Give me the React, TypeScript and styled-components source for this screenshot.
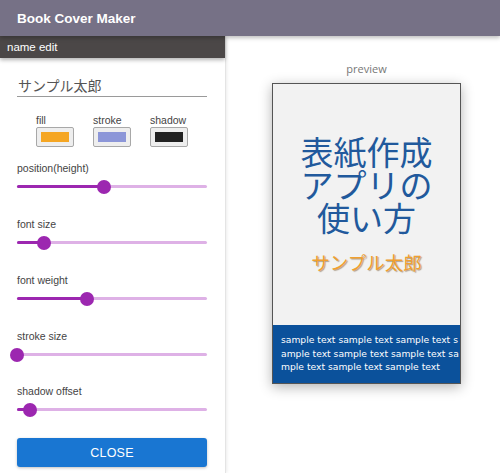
import React from "react";
import styled, { createGlobalStyle } from "styled-components";

const Global = createGlobalStyle`
  html, body { margin: 0; padding: 0; background: #fff; }
  body { font-family: "Liberation Sans", Arial, sans-serif; }
  * { box-sizing: border-box; }
`;

const Page = styled.div`
  width: 500px;
  height: 473px;
  display: flex;
  flex-direction: column;
  overflow: hidden;
`;

const AppBar = styled.header`
  height: 36px;
  flex: none;
  background: #767186;
  display: flex;
  align-items: center;
  padding-left: 17px;
  color: #fff;
  font-weight: bold;
  font-size: 13.5px;
  box-shadow: 0 2px 4px rgba(0,0,0,0.25);
  position: relative;
  z-index: 2;
`;

const Body = styled.div`
  flex: 1;
  display: flex;
  min-height: 0;
`;

const Drawer = styled.aside`
  width: 226px;
  flex: none;
  border-right: 1px solid #e4e4e4;
  box-shadow: 1px 0 3px rgba(0,0,0,0.08);
  display: flex;
  flex-direction: column;
`;

const DrawerHead = styled.div`
  height: 22px;
  flex: none;
  background: #4b4747;
  color: #fff;
  font-size: 11.5px;
  display: flex;
  align-items: center;
  padding-left: 7px;
  box-shadow: 0 2px 4px rgba(0,0,0,0.3);
  position: relative;
  z-index: 1;
`;

const DrawerBody = styled.div`
  padding: 0 18px 0 17px;
  display: flex;
  flex-direction: column;
  flex: none;
`;

const NameField = styled.div`
  margin-top: 17px;
  height: 22px;
  border-bottom: 1px solid #9a9a9a;
  font-family: "Noto Sans CJK JP", sans-serif;
  font-size: 14px;
  color: #555;
  padding-left: 1px;
  line-height: 20px;
`;

const ColorRow = styled.div`
  display: flex;
  gap: 19px;
  padding-left: 19px;
  margin-top: 17px;
`;

const ColorItem = styled.div`
  display: flex;
  flex-direction: column;
  font-size: 10.5px;
  color: #444;
`;

const ColorBox = styled.div<{ $c: string }>`
  margin-top: 1px;
  width: 38px;
  height: 20px;
  border: 1px solid #a8a8a8;
  border-radius: 2px;
  background: #eee;
  padding: 4px;
  &::after {
    content: "";
    display: block;
    width: 100%;
    height: 100%;
    background: ${p => p.$c};
  }
`;

const SliderBlock = styled.div<{ $mt: number }>`
  margin-top: ${p => p.$mt}px;
  display: flex;
  flex-direction: column;
`;

const SliderLabel = styled.div`
  font-size: 10.5px;
  color: #444;
  height: 13px;
`;

const SliderTrack = styled.div`
  position: relative;
  height: 22px;
  width: 190px;
`;

const Rail = styled.div`
  position: absolute;
  left: 0;
  right: 0;
  top: 10px;
  height: 3px;
  border-radius: 2px;
  background: #deb1e6;
`;

const Fill = styled.div`
  position: absolute;
  left: 0;
  top: 10px;
  height: 3px;
  border-radius: 2px;
  background: #9c27b0;
`;

const Thumb = styled.div`
  position: absolute;
  top: 4.5px;
  width: 14px;
  height: 14px;
  margin-left: -7px;
  border-radius: 50%;
  background: #9c27b0;
`;

const CloseButton = styled.button`
  margin-top: 18px;
  width: 190px;
  height: 29px;
  border: none;
  border-radius: 3px;
  background: #1976d2;
  color: #fff;
  font-family: "Liberation Sans", Arial, sans-serif;
  font-size: 12.5px;
  letter-spacing: 0.2px;
  box-shadow: 0 1px 3px rgba(0,0,0,0.25);
`;

const Main = styled.main`
  flex: 1;
  display: flex;
  flex-direction: column;
  align-items: center;
  padding-left: 7px;
`;

const PreviewLabel = styled.div`
  margin-top: 25px;
  font-family: "Open Sans", sans-serif;
  font-size: 11px;
  color: #777;
`;

const Cover = styled.div`
  margin-top: 7px;
  width: 189px;
  height: 301px;
  border: 1px solid #555;
  background: #f2f2f2;
  display: flex;
  flex-direction: column;
  box-shadow: 0 3px 12px rgba(0,0,0,0.3);
`;

const CoverTop = styled.div`
  flex: 1;
  display: flex;
  flex-direction: column;
  align-items: center;
`;

const Title = styled.div`
  margin-top: 51px;
  font-family: "Noto Sans CJK JP", sans-serif;
  font-size: 33px;
  line-height: 33px;
  color: #21599c;
  text-align: center;
  width: 140px;
`;

const Author = styled.div`
  margin-top: 16px;
  font-family: "Noto Sans CJK JP", sans-serif;
  font-size: 18.5px;
  line-height: 24px;
  color: #f0a030;
  text-shadow: 1px 1px 1px rgba(90,60,20,0.45);
`;

const Band = styled.div`
  height: 58px;
  background: #0b519b;
  color: #fff;
  font-family: "DejaVu Sans", Verdana, sans-serif;
  font-size: 9.2px;
  line-height: 13.5px;
  padding: 8px 0 0 8px;
  word-break: break-all;
`;

const sliders = [
  { label: "position(height)", v: 46, mt: 15 },
  { label: "font size", v: 14, mt: 21 },
  { label: "font weight", v: 37, mt: 21 },
  { label: "stroke size", v: 0, mt: 21 },
  { label: "shadow offset", v: 7, mt: 20 },
];

export default function App() {
  return (
    <Page>
      <Global />
      <AppBar>Book Cover Maker</AppBar>
      <Body>
        <Drawer>
          <DrawerHead>name edit</DrawerHead>
          <DrawerBody>
            <NameField>サンプル太郎</NameField>
            <ColorRow>
              <ColorItem>fill<ColorBox $c="#f5a623" /></ColorItem>
              <ColorItem>stroke<ColorBox $c="#8c96d8" /></ColorItem>
              <ColorItem>shadow<ColorBox $c="#222" /></ColorItem>
            </ColorRow>
            {sliders.map(s => (
              <SliderBlock key={s.label} $mt={s.mt}>
                <SliderLabel>{s.label}</SliderLabel>
                <SliderTrack>
                  <Rail />
                  <Fill style={{ width: `${s.v}%` }} />
                  <Thumb style={{ left: `${s.v}%` }} />
                </SliderTrack>
              </SliderBlock>
            ))}
            <CloseButton>CLOSE</CloseButton>
          </DrawerBody>
        </Drawer>
        <Main>
          <PreviewLabel>preview</PreviewLabel>
          <Cover>
            <CoverTop>
              <Title>表紙作成アプリの使い方</Title>
              <Author>サンプル太郎</Author>
            </CoverTop>
            <Band>sample text sample text sample text sample text sample text sample text sample text sample text sample text</Band>
          </Cover>
        </Main>
      </Body>
    </Page>
  );
}
